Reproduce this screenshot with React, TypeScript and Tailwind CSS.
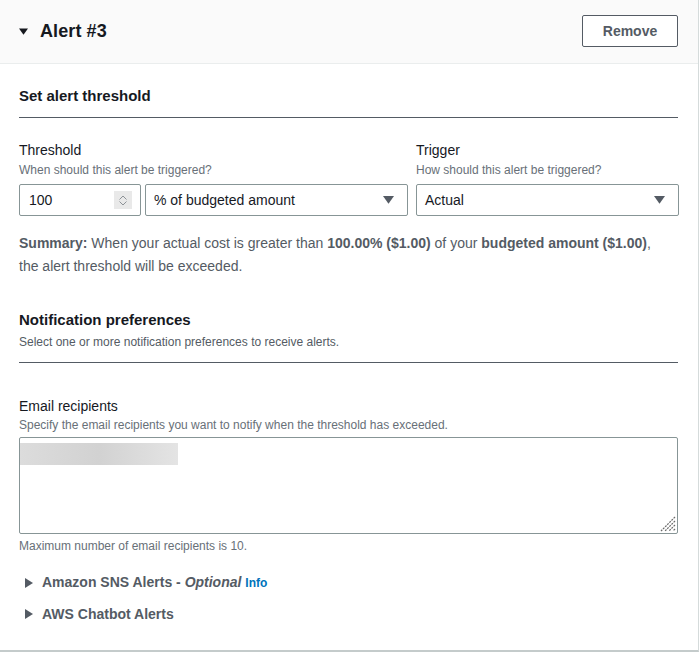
import React from "react";

const font = { fontFamily: '"Liberation Sans", Arial, sans-serif' };

function DownTriangle({ className = "" }: { className?: string }) {
  return (
    <svg width="10" height="8" viewBox="0 0 10 8" className={className}>
      <path d="M0 0 L10 0 L5 7 Z" fill="currentColor" />
    </svg>
  );
}

function RightTriangle({ className = "" }: { className?: string }) {
  return (
    <svg width="8" height="10" viewBox="0 0 8 10" className={className}>
      <path d="M0 0 L8 5 L0 10 Z" fill="currentColor" />
    </svg>
  );
}

function Select({ value, width }: { value: string; width: string }) {
  return (
    <div
      className={`${width} h-8 border border-[#879596] rounded-[2px] flex items-center justify-between pl-2 pr-[13px] text-[14px] text-[#16191f] bg-white`}
    >
      <span>{value}</span>
      <DownTriangle className="text-[#545b64] w-[11px] h-[9px]" />
    </div>
  );
}

function ResizeGrip() {
  return (
    <svg width="16" height="16" viewBox="0 0 16 16" className="absolute right-[2px] bottom-[2px] pointer-events-none">
      <g stroke="#6b6b6b" strokeWidth="1.2" strokeDasharray="2 1">
        <line x1="15" y1="1" x2="1" y2="15" />
        <line x1="15" y1="5" x2="5" y2="15" />
        <line x1="15" y1="9" x2="9" y2="15" />
        <line x1="15" y1="13" x2="13" y2="15" />
      </g>
    </svg>
  );
}

export default function App() {
  return (
    <div style={font} className="w-[699px] h-[652px] bg-white border-r border-b-2 border-[#d5dbdb] border-b-[#c4cbcb]">
      <div className="h-16 bg-[#fafafa] border-b border-[#eaeded] flex items-center justify-between pl-[19px] pr-5">
        <div className="flex items-center gap-[12px]">
          <DownTriangle className="text-[#16191f] w-[9px] h-[8px]" />
          <h2 className="text-[18px] font-bold text-[#16191f] tracking-[0.1px]">Alert #3</h2>
        </div>
        <button className="w-24 h-8 border border-[#545b64] rounded-[2px] bg-white text-[14px] font-bold text-[#545b64] -mt-[1px]">
          Remove
        </button>
      </div>

      <div className="pl-[19px] pr-5">
        <div className="pt-[21px]">
          <div className="pb-[10px] border-b border-[#545b64] text-[15px] leading-[22px] font-bold text-[#16191f]">
            Set alert threshold
          </div>
        </div>

        <div className="mt-[22px] flex gap-[8px]">
          <div className="w-[389px]">
            <div className="text-[14px] leading-5 text-[#16191f]">Threshold</div>
            <div className="mt-[2px] text-[12px] leading-4 text-[#687078]">When should this alert be triggered?</div>
            <div className="mt-[6px] flex gap-[4px]">
              <div className="w-[122px] h-8 border border-[#879596] rounded-[2px] flex items-center justify-between pl-[9px] pr-2 text-[14px] text-[#16191f]">
                <span>100</span>
                <div className="w-[18px] h-[18px] bg-[#e9e9e9] flex flex-col items-center justify-center gap-[1px]">
                  <svg width="8" height="5" viewBox="0 0 8 5">
                    <path d="M0.5 4.5 L4 1 L7.5 4.5" stroke="#8d9297" strokeWidth="1" fill="none" />
                  </svg>
                  <svg width="8" height="5" viewBox="0 0 8 5">
                    <path d="M0.5 0.5 L4 4 L7.5 0.5" stroke="#8d9297" strokeWidth="1" fill="none" />
                  </svg>
                </div>
              </div>
              <Select value="% of budgeted amount" width="w-[263px]" />
            </div>
          </div>
          <div className="w-[263px]">
            <div className="text-[14px] leading-5 text-[#16191f]">Trigger</div>
            <div className="mt-[2px] text-[12px] leading-4 text-[#687078]">How should this alert be triggered?</div>
            <div className="mt-[6px]">
              <Select value="Actual" width="w-[263px]" />
            </div>
          </div>
        </div>

        <p className="mt-4 text-[14px] leading-[23px] text-[#545b64]">
          <b>Summary:</b> When your actual cost is greater than <b>100.00% ($1.00)</b> of your{" "}
          <b>budgeted amount ($1.00)</b>,<br />
          the alert threshold will be exceeded.
        </p>

        <div className="mt-[31px]">
          <div className="pb-[12px] border-b border-[#545b64]">
            <div className="text-[15px] leading-[22px] font-bold text-[#16191f]">Notification preferences</div>
            <div className="mt-[3px] text-[12px] leading-4 text-[#545b64]">
              Select one or more notification preferences to receive alerts.
            </div>
          </div>
        </div>

        <div className="mt-[33px]">
          <div className="text-[14px] leading-5 text-[#16191f]">Email recipients</div>
          <div className="mt-[1px] text-[12px] leading-4 text-[#687078]">
            Specify the email recipients you want to notify when the threshold has exceeded.
          </div>
          <div className="relative mt-1">
            <textarea
              className="block w-[659px] h-[97px] border border-[#879596] rounded-[2px] outline-none resize-none"
              defaultValue=""
            />
            <div className="absolute left-px top-[6px] w-[158px] h-[22px] bg-gradient-to-r from-[#dcdcdc] via-[#d2d2d2] to-[#e4e4e4]" />
            <ResizeGrip />
          </div>
          <div className="mt-[4px] text-[12px] leading-4 text-[#687078]">Maximum number of email recipients is 10.</div>
        </div>

        <div className="mt-[18px] flex items-center gap-[9px] pl-[6px] text-[14px] leading-5 font-bold text-[#545b64]">
          <RightTriangle className="text-[#545b64] w-[8px] h-[10px]" />
          <span>
            Amazon SNS Alerts - <i>Optional</i>{" "}
            <a className="text-[12px] text-[#0073bb]">Info</a>
          </span>
        </div>
        <div className="mt-[11px] flex items-center gap-[9px] pl-[6px] text-[14px] leading-5 font-bold text-[#545b64]">
          <RightTriangle className="text-[#545b64] w-[8px] h-[10px]" />
          <span>AWS Chatbot Alerts</span>
        </div>
      </div>
    </div>
  );
}
